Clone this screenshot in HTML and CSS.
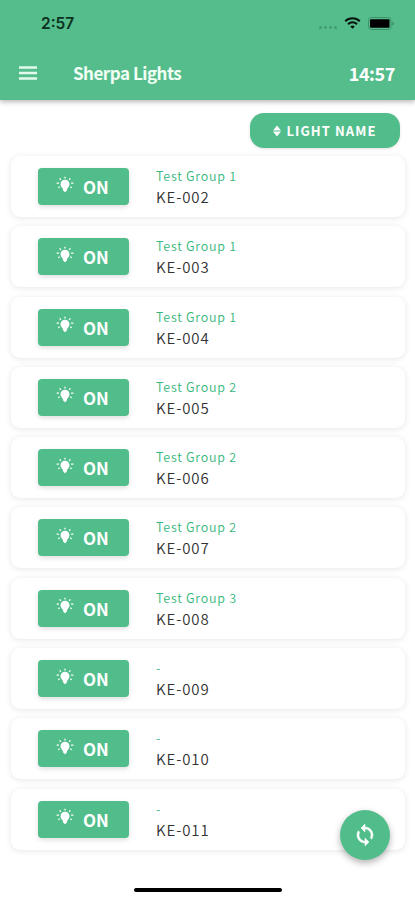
FILE: index.html
```
<!DOCTYPE html>
<html lang="en">
<head>
<meta charset="UTF-8">
<meta name="viewport" content="width=device-width, initial-scale=1.0">
<title>Sherpa Lights</title>
<link rel="stylesheet" href="styles.css">
</head>
<body>
<svg class="defs" width="0" height="0">
  <symbol id="bulb" viewBox="0 0 18 18">
    <path d="M9 3.8a4.5 4.5 0 0 0-4.5 4.5c0 2 1.4 3.2 2.2 4.3l.6 2.2L9 16.3l1.7-1.5.6-2.2c.8-1.1 2.2-2.3 2.2-4.3A4.5 4.5 0 0 0 9 3.8z" fill="currentColor"/>
    <path d="M9 .7v1.8M3.6 2.4l1.3 1.4M14.4 2.4l-1.3 1.4M.6 7.2h2.3M15.1 7.2h2.3M2.3 11.8l1.4-1M15.7 11.8l-1.4-1" stroke="currentColor" stroke-width="1.3"/>
  </symbol>
</svg>

<header class="header">
  <div class="status-bar">
    <span class="status-time">2:57</span>
    <div class="status-icons">
      <span class="signal"><i></i><i></i><i></i><i></i></span>
      <svg class="wifi" width="17" height="12" viewBox="0 0 17 12" fill="none" stroke="#07150e" stroke-width="2">
        <path d="M1.2 4.3a10.3 10.3 0 0 1 14.6 0M4 7.2a6.4 6.4 0 0 1 9 0"/>
        <path d="M8.5 11.8L6.2 9.5a3.3 3.3 0 0 1 4.6 0z" fill="#07150e" stroke="none"/>
      </svg>
      <svg class="battery" width="27" height="13" viewBox="0 0 27 13">
        <rect x=".5" y=".5" width="22.5" height="12" rx="3" fill="none" stroke="#3f9169"/>
        <rect x="2" y="2.3" width="19.5" height="8.4" rx="1" fill="#000"/>
        <path d="M24.3 4.3c2.2.8 2.2 3.6 0 4.4z" fill="#3f9169"/>
      </svg>
    </div>
  </div>
  <div class="toolbar">
    <svg class="menu" width="18" height="14" viewBox="0 0 18 14"><path d="M0 1.5h18M0 7h18M0 12.5h18" stroke="#e2f9eb" stroke-width="2.4"/></svg>
    <h1>Sherpa Lights</h1>
    <span class="clock">14:57</span>
  </div>
</header>

<main class="content">
  <button class="sort">
    <svg width="8" height="12" viewBox="0 0 8 12"><path d="M4 .5l4 5H0zM4 11.5l4-5H0z" fill="#fff"/></svg>
    <span>LIGHT NAME</span>
  </button>
  <div class="list">
    <div class="card">
      <button class="toggle"><svg><use href="#bulb"/></svg><span>ON</span></button>
      <div class="info"><span class="group">Test Group 1</span><span class="name">KE-002</span></div>
    </div>
    <div class="card">
      <button class="toggle"><svg><use href="#bulb"/></svg><span>ON</span></button>
      <div class="info"><span class="group">Test Group 1</span><span class="name">KE-003</span></div>
    </div>
    <div class="card">
      <button class="toggle"><svg><use href="#bulb"/></svg><span>ON</span></button>
      <div class="info"><span class="group">Test Group 1</span><span class="name">KE-004</span></div>
    </div>
    <div class="card">
      <button class="toggle"><svg><use href="#bulb"/></svg><span>ON</span></button>
      <div class="info"><span class="group">Test Group 2</span><span class="name">KE-005</span></div>
    </div>
    <div class="card">
      <button class="toggle"><svg><use href="#bulb"/></svg><span>ON</span></button>
      <div class="info"><span class="group">Test Group 2</span><span class="name">KE-006</span></div>
    </div>
    <div class="card">
      <button class="toggle"><svg><use href="#bulb"/></svg><span>ON</span></button>
      <div class="info"><span class="group">Test Group 2</span><span class="name">KE-007</span></div>
    </div>
    <div class="card">
      <button class="toggle"><svg><use href="#bulb"/></svg><span>ON</span></button>
      <div class="info"><span class="group">Test Group 3</span><span class="name">KE-008</span></div>
    </div>
    <div class="card">
      <button class="toggle"><svg><use href="#bulb"/></svg><span>ON</span></button>
      <div class="info"><span class="group">-</span><span class="name">KE-009</span></div>
    </div>
    <div class="card">
      <button class="toggle"><svg><use href="#bulb"/></svg><span>ON</span></button>
      <div class="info"><span class="group">-</span><span class="name">KE-010</span></div>
    </div>
    <div class="card">
      <button class="toggle"><svg><use href="#bulb"/></svg><span>ON</span></button>
      <div class="info"><span class="group">-</span><span class="name">KE-011</span></div>
    </div>
  </div>
</main>

<button class="refresh">
  <svg width="24" height="24" viewBox="0 0 24 24"><path d="M12 4V1L8 5l4 4V6c3.31 0 6 2.69 6 6 0 1.01-.25 1.97-.7 2.8l1.46 1.46A7.93 7.93 0 0 0 20 12c0-4.42-3.58-8-8-8zm0 14c-3.31 0-6-2.69-6-6 0-1.01.25-1.97.7-2.8L5.24 7.74A7.93 7.93 0 0 0 4 12c0 4.42 3.58 8 8 8v3l4-4-4-4v3z" fill="#fff" stroke="#fff" stroke-width=".5"/></svg>
</button>
<footer class="home"><span></span></footer>
</body>
</html>
```
FILE: styles.css
```
* {
  box-sizing: border-box;
}
body {
  margin: 0;
  height: 900px;
  display: flex;
  flex-direction: column;
  background: #fff;
  font-family: "Noto Sans CJK KR", sans-serif;
  overflow: hidden;
}
button {
  border: none;
  padding: 0;
  font-family: inherit;
  color: #fff;
  background: #51bd8b;
  display: flex;
  align-items: center;
}
.defs {
  position: absolute;
}
.header {
  height: 100px;
  flex: none;
  background: #55bd8b;
  box-shadow: 0 2px 5px rgba(0, 0, 0, 0.28);
}
.status-bar {
  height: 46px;
  padding: 0 20px 0 41px;
  display: flex;
  justify-content: space-between;
  align-items: center;
}
.status-time {
  padding-top: 2px;
  font: 600 15.5px/20px Inter, sans-serif;
  color: #0c3020;
}
.status-icons {
  display: flex;
  align-items: center;
}
.signal {
  display: flex;
  gap: 2px;
  margin: 8px 7px 0 0;
}
.signal i {
  width: 3px;
  height: 3px;
  border-radius: 50%;
  background: #419c71;
}
.battery {
  margin-left: 7px;
}
.toolbar {
  height: 54px;
  padding: 0 20px 0 19px;
  display: flex;
  align-items: center;
}
h1 {
  margin: 0 0 0 36px;
  font-size: 17px;
  line-height: 24px;
  font-weight: 700;
  letter-spacing: -0.5px;
  color: #f1fff5;
}
.clock {
  margin-left: auto;
  font-size: 18px;
  line-height: 24px;
  font-weight: 700;
  letter-spacing: -0.4px;
  color: #fff;
}
.content {
  padding: 13px 10px 0 11px;
}
.sort {
  width: 150px;
  height: 35px;
  margin: 0 5px 8px auto;
  border-radius: 14px;
  justify-content: center;
  gap: 5px;
  font-size: 13px;
  font-weight: 700;
  letter-spacing: 1.1px;
  box-shadow: 0 1px 3px rgba(0, 0, 0, 0.12);
}
.list {
  display: flex;
  flex-direction: column;
  gap: 9.3px;
}
.card {
  height: 61px;
  padding-left: 27px;
  display: flex;
  align-items: center;
  border-radius: 9px;
  background: #fff;
  box-shadow: 0 1px 6px rgba(0, 0, 0, 0.1);
}
.toggle {
  width: 91px;
  height: 37px;
  padding-left: 18px;
  border-radius: 4px;
  font-size: 17px;
  font-weight: 700;
  box-shadow: 0 2px 5px rgba(0, 0, 0, 0.13);
}
.toggle svg {
  width: 18px;
  height: 18px;
  margin: -4px 9px 0 0;
}
.info {
  display: flex;
  flex-direction: column;
  margin-left: 27px;
}
.group {
  font-size: 12.5px;
  line-height: 20px;
  font-weight: 350;
  letter-spacing: 0.75px;
  color: #36b77c;
}
.name {
  font-size: 15px;
  line-height: 21px;
  font-weight: 350;
  letter-spacing: 0.9px;
  color: #333;
}
.refresh {
  position: fixed;
  left: 340px;
  top: 810px;
  width: 50px;
  height: 50px;
  border-radius: 50%;
  justify-content: center;
  box-shadow: 0 3px 7px rgba(0, 0, 0, 0.3);
}
.home {
  margin-top: auto;
  padding-bottom: 8px;
  display: flex;
  justify-content: center;
}
.home span {
  width: 148px;
  height: 4px;
  border-radius: 2px;
  background: #000;
}
```
